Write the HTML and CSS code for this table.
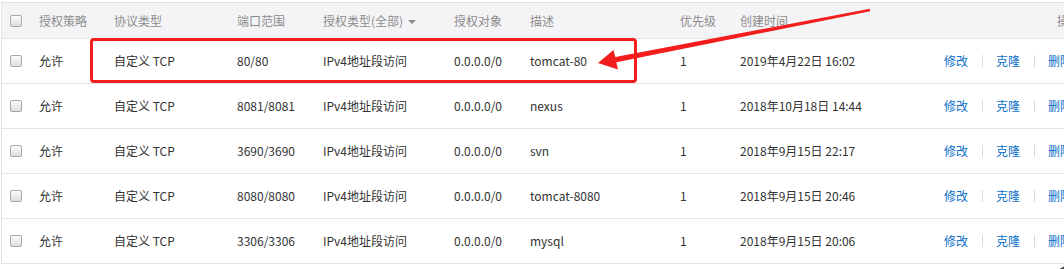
FILE: index.html
```html
<!DOCTYPE html>
<html lang="zh-CN">
<head>
<meta charset="utf-8">
<title>安全组规则</title>
<link rel="stylesheet" href="styles.css">
</head>
<body>
<div class="panel">
  <div class="row head">
    <div class="cell chk"><span class="box"></span></div>
    <div class="cell">授权策略</div>
    <div class="cell">协议类型</div>
    <div class="cell">端口范围</div>
    <div class="cell">授权类型(全部) <span class="caret"></span></div>
    <div class="cell">授权对象</div>
    <div class="cell">描述</div>
    <div class="cell">优先级</div>
    <div class="cell">创建时间</div>
    <div class="cell op-head">操作</div>
  </div>
  <div class="row">
    <div class="cell chk"><span class="box"></span></div>
    <div class="cell">允许</div>
    <div class="cell">自定义 TCP</div>
    <div class="cell">80/80</div>
    <div class="cell">IPv4地址段访问</div>
    <div class="cell">0.0.0.0/0</div>
    <div class="cell">tomcat-80</div>
    <div class="cell">1</div>
    <div class="cell">2019年4月22日 16:02</div>
    <div class="cell ops"><a>修改</a><i class="sep"></i><a>克隆</a><i class="sep"></i><a>删除</a></div>
  </div>
  <div class="row">
    <div class="cell chk"><span class="box"></span></div>
    <div class="cell">允许</div>
    <div class="cell">自定义 TCP</div>
    <div class="cell">8081/8081</div>
    <div class="cell">IPv4地址段访问</div>
    <div class="cell">0.0.0.0/0</div>
    <div class="cell">nexus</div>
    <div class="cell">1</div>
    <div class="cell">2018年10月18日 14:44</div>
    <div class="cell ops"><a>修改</a><i class="sep"></i><a>克隆</a><i class="sep"></i><a>删除</a></div>
  </div>
  <div class="row">
    <div class="cell chk"><span class="box"></span></div>
    <div class="cell">允许</div>
    <div class="cell">自定义 TCP</div>
    <div class="cell">3690/3690</div>
    <div class="cell">IPv4地址段访问</div>
    <div class="cell">0.0.0.0/0</div>
    <div class="cell">svn</div>
    <div class="cell">1</div>
    <div class="cell">2018年9月15日 22:17</div>
    <div class="cell ops"><a>修改</a><i class="sep"></i><a>克隆</a><i class="sep"></i><a>删除</a></div>
  </div>
  <div class="row">
    <div class="cell chk"><span class="box"></span></div>
    <div class="cell">允许</div>
    <div class="cell">自定义 TCP</div>
    <div class="cell">8080/8080</div>
    <div class="cell">IPv4地址段访问</div>
    <div class="cell">0.0.0.0/0</div>
    <div class="cell">tomcat-8080</div>
    <div class="cell">1</div>
    <div class="cell">2018年9月15日 20:46</div>
    <div class="cell ops"><a>修改</a><i class="sep"></i><a>克隆</a><i class="sep"></i><a>删除</a></div>
  </div>
  <div class="row">
    <div class="cell chk"><span class="box"></span></div>
    <div class="cell">允许</div>
    <div class="cell">自定义 TCP</div>
    <div class="cell">3306/3306</div>
    <div class="cell">IPv4地址段访问</div>
    <div class="cell">0.0.0.0/0</div>
    <div class="cell">mysql</div>
    <div class="cell">1</div>
    <div class="cell">2018年9月15日 20:06</div>
    <div class="cell ops"><a>修改</a><i class="sep"></i><a>克隆</a><i class="sep"></i><a>删除</a></div>
  </div>
</div>
<div class="mark-box"></div>
<svg class="mark-arrow" width="1064" height="269" viewBox="0 0 1064 269" xmlns="http://www.w3.org/2000/svg">
  <polygon fill="#f41d1d" points="598,63 618,69.5 616.3,62.3 870.2,11.2 869.8,8.8 615.3,57 613.5,50"/>
</svg>
<div class="float-ball"></div>
</body>
</html>
```

FILE: styles.css
```css
html, body {
  margin: 0;
  padding: 0;
  background: #fff;
  overflow: hidden;
}
body {
  width: 1064px;
  height: 269px;
  position: relative;
  font-family: "Noto Sans CJK SC", "Microsoft YaHei", sans-serif;
  font-size: 12px;
  color: #333;
}
.panel {
  margin: 2px 0 0 1px;
  border-left: 1px solid #e3e3e6;
  border-top: 1px solid #e3e3e6;
  width: 1130px;
}
.row {
  display: grid;
  grid-template-columns: 37px 75px 123px 86px 131px 76px 150px 60px 204px 180px;
  height: 45px;
  box-sizing: border-box;
  border-bottom: 1px solid #e5e5e5;
  align-items: center;
}
.row.head {
  height: 36px;
  background: #f4f4f6;
  color: #8c8c8c;
  border-bottom-color: #e3e3e6;
}
.cell {
  white-space: nowrap;
  line-height: 16px;
}
.chk {
  padding-left: 8px;
  display: flex;
  align-items: center;
}
.box {
  display: block;
  width: 10px;
  height: 10px;
  border: 1px solid #a9a9a9;
  border-radius: 2px;
  background: linear-gradient(#fbfbfb, #dedede);
}
.caret {
  display: inline-block;
  width: 0;
  height: 0;
  margin-left: 2px;
  border-left: 4px solid transparent;
  border-right: 4px solid transparent;
  border-top: 4px solid #8c8c8c;
  vertical-align: middle;
}
.op-head {
  padding-left: 113px;
}
.ops {
  display: flex;
  align-items: center;
}
.ops a {
  color: #0b6fc9;
  cursor: pointer;
}
.sep {
  display: block;
  width: 1px;
  height: 12px;
  background: #d9d9d9;
  margin: 0 13px 0 14px;
}
.mark-box {
  position: absolute;
  left: 90px;
  top: 38px;
  width: 541px;
  height: 39px;
  border: 3px solid #f41d1d;
  border-radius: 4px;
}
.mark-arrow {
  position: absolute;
  left: 0;
  top: 0;
}
.float-ball {
  position: absolute;
  left: 1046px;
  top: 264px;
  width: 60px;
  height: 60px;
  border-radius: 50%;
  background: #4a4a4a;
}
```
